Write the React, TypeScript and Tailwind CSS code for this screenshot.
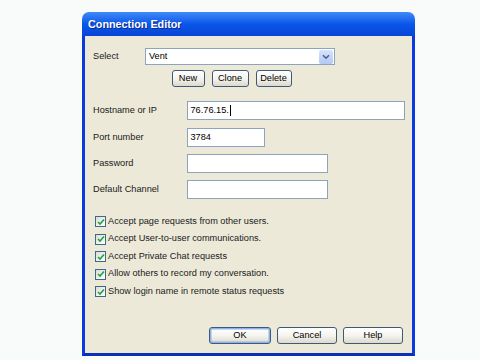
import React from 'react';

const font = { fontFamily: '"Liberation Sans", Arial, sans-serif' };

const XpButton: React.FC<{ label: string; className: string; focused?: boolean }> = ({ label, className, focused }) => (
  <div
    className={`flex items-center justify-center rounded-[3px] border border-[#3d5a7a] bg-gradient-to-b from-[#ffffff] via-[#f5f4ee] to-[#dcd9cc] text-[9.2px] text-black ${className} ${
      focused ? 'shadow-[inset_0_0_0_1.5px_#8fb1ec]' : ''
    }`}
  >
    {label}
  </div>
);

const Field: React.FC<{ label: string; value?: string; width: string; caret?: boolean; className: string }> = ({
  label,
  value,
  width,
  caret,
  className,
}) => (
  <div className={`flex items-center ${className}`}>
    <div className="w-[93.5px] text-[9.2px] text-[#1a1a1a]">{label}</div>
    <div className={`h-[19px] ${width} flex items-center border border-[#8ea4bd] bg-white pl-[3px] text-[9.2px] text-black`}>
      {value}
      {caret && <span className="ml-[1px] inline-block h-[11px] w-[1px] bg-black" />}
    </div>
  </div>
);

const Check: React.FC<{ label: string }> = ({ label }) => (
  <div className="flex h-[17.5px] items-center">
    <div className="ml-[2px] flex h-[11px] w-[11px] items-center justify-center border border-[#3c6a8c] bg-gradient-to-br from-[#dcdcd6] to-[#ffffff]">
      <svg width="8" height="8" viewBox="0 0 8 8">
        <path d="M1 4 L3 6 L7 1.5" fill="none" stroke="#22a23a" strokeWidth="1.6" />
      </svg>
    </div>
    <span className="ml-[2px] text-[9.2px] text-[#1a1a1a]">{label}</span>
  </div>
);

const App: React.FC = () => {
  return (
    <div className="h-[360px] w-[480px] bg-[#f9fafa] pl-[82px] pt-[12px]" style={font}>
      <div className="flex h-[344px] w-[333px] flex-col overflow-hidden rounded-t-[7px]">
        {/* title bar */}
        <div className="flex h-[24px] items-center bg-gradient-to-b from-[#3f8af6] via-[#0b56ea] to-[#0745d6] pl-[6px]">
          <span className="text-[10.8px] font-bold text-white [text-shadow:1px_1px_0_#0a2a8a]">Connection Editor</span>
        </div>

        {/* body */}
        <div className="flex flex-1 flex-col border-x-[3px] border-b-[3px] border-x-[#0a3ae0] border-b-[#0b2fb8] bg-[#ece9d8] pl-[8px]">
          <div className="mt-[12px] flex h-[17px] items-center">
            <div className="w-[52px] text-[9.2px] text-[#1a1a1a]">Select</div>
            <div className="flex h-[17px] w-[190px] items-center border border-[#8ea4bd] bg-white">
              <span className="flex-1 pl-[3px] text-[9.2px] text-black">Vent</span>
              <div className="mr-[1px] flex h-[14px] w-[14px] items-center justify-center rounded-[2px] bg-gradient-to-b from-[#d6e3fd] to-[#b3c8f5]">
                <svg width="8" height="6" viewBox="0 0 8 6">
                  <path d="M1 1.2 L4 4.2 L7 1.2" fill="none" stroke="#4d6185" strokeWidth="1.6" />
                </svg>
              </div>
            </div>
          </div>

          <div className="ml-[78.5px] mt-[5px] flex h-[17px] gap-[7px]">
            <XpButton label="New" className="w-[33px]" />
            <XpButton label="Clone" className="w-[37px]" />
            <XpButton label="Delete" className="w-[36px]" />
          </div>

          <Field label="Hostname or IP" value="76.76.15." caret width="w-[218px]" className="mt-[14px]" />
          <Field label="Port number" value="3784" width="w-[78px]" className="mt-[8px]" />
          <Field label="Password" width="w-[141px]" className="mt-[7px]" />
          <Field label="Default Channel" width="w-[141px]" className="mt-[7px]" />

          <div className="mt-[13.75px] flex flex-col">
            <Check label="Accept page requests from other users." />
            <Check label="Accept User-to-user communications." />
            <Check label="Accept Private Chat requests" />
            <Check label="Allow others to record my conversation." />
            <Check label="Show login name in remote status requests" />
          </div>

          <div className="mt-[26.5px] flex justify-end gap-[6px] pr-[9px]">
            <XpButton label="OK" className="h-[17.5px] w-[62px]" focused />
            <XpButton label="Cancel" className="h-[17.5px] w-[60px]" />
            <XpButton label="Help" className="h-[17.5px] w-[60px]" />
          </div>
        </div>
      </div>
    </div>
  );
};

export default App;
